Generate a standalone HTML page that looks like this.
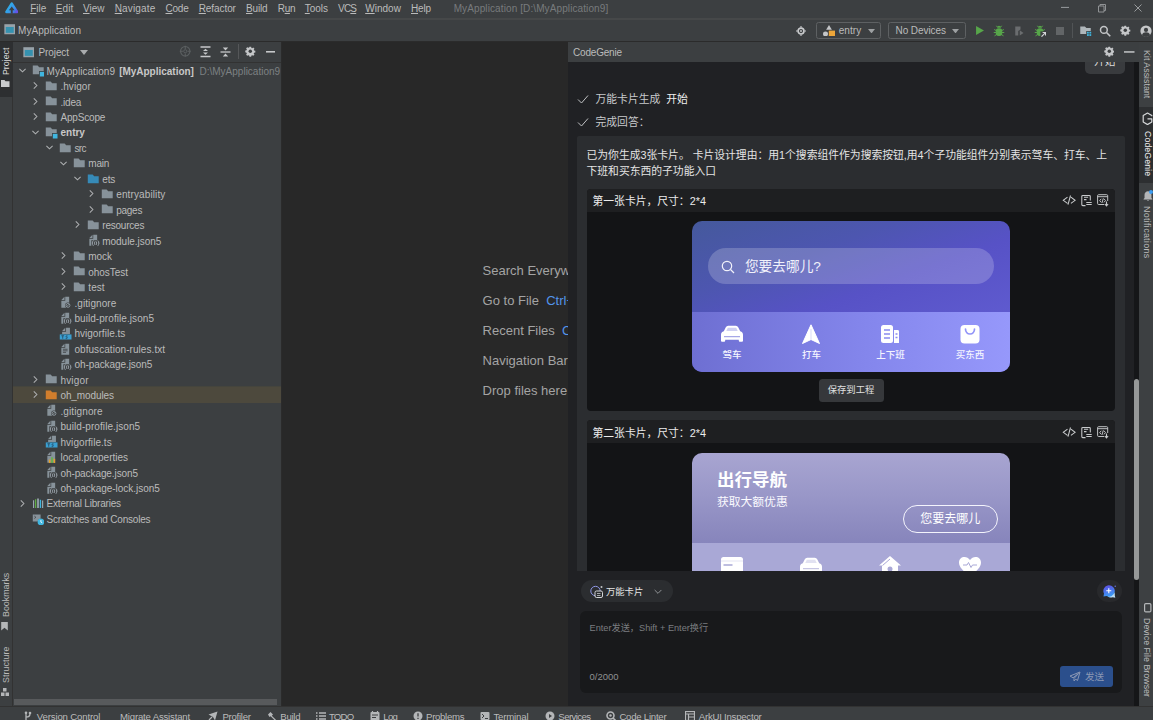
<!DOCTYPE html>
<html lang="zh">
<head>
<meta charset="utf-8">
<title>MyApplication</title>
<style>
*{box-sizing:border-box;margin:0;padding:0}
html,body{width:1153px;height:720px;overflow:hidden;background:#3c3f41}
body{position:relative;font-family:"Liberation Sans","Noto Sans CJK SC",sans-serif;font-size:10px;color:#bbbbbb;line-height:1}
.abs{position:absolute}
.t{position:absolute;white-space:nowrap;line-height:14px;height:14px}
u{text-decoration-thickness:1px;text-underline-offset:1px}
/* top bars */
#menubar{left:0;top:0;width:1153px;height:18px;background:#3c3f41}
#menubar .t{font-size:10px;color:#bbbbbb}
#navbar{left:0;top:17px;width:1153px;height:25px;background:#3c3f41;border-top:1px solid #3c3f41;border-bottom:1px solid #2b2b2b}
#navbar:before{content:"";position:absolute;left:0;top:-.2px;width:100%;height:2.200px;background:#464849}
/* left strip */
#lstrip{left:0;top:42px;width:13px;height:664px;background:#3c3f41;border-right:1px solid #323232}
.vt{position:absolute;white-space:nowrap;font-size:9.2px;line-height:12px;height:12px;transform-origin:0 0}
/* project panel */
#proj{left:13px;top:42px;width:269px;height:664px;background:#3c3f41;border-right:1px solid #2b2b2b;overflow:hidden}
#projhead{left:0;top:0;width:268px;height:21px;border-bottom:1px solid #323232}
.row{position:absolute;left:0;width:268px;height:15.48px}
.row .t{top:2px;line-height:14px;font-size:10px;color:#bbbbbb}
.row svg{position:absolute}
/* editor */
#editor{left:282px;top:42px;width:286px;height:664px;background:#282828;overflow:hidden}
#editor .t{font-size:13px;line-height:16px;height:16px;color:#a4a4a4}
#editor .k{color:#5394ec}
/* codegenie */
#cg{left:568px;top:42px;width:571px;height:664px;background:#202124;overflow:hidden}
#cghead{left:0;top:0;width:571px;height:20px;background:#3c3f41}
/* right strip */
#rstrip{left:1139px;top:42px;width:14px;height:664px;background:#3d4042}
/* status bar */
#status{left:0;top:705.5px;width:1153px;height:14.5px;background:#3c3f41;border-top:1px solid #323232}
#status .t{font-size:9.6px;line-height:12px;height:12px;color:#bbbbbb}
#status svg{position:absolute}
.cj{font-family:"Liberation Sans","Noto Sans CJK SC",sans-serif}
</style>
</head>
<body>
<!-- MENUBAR -->
<div id="menubar" class="abs">
<svg style="left:4.8px;top:2px" class="abs" width="13.5" height="11.5" viewBox="0 0 13.500 11.500" ><defs><linearGradient id="lg" x1="0" y1=".3" x2="1" y2=".9"><stop offset="0" stop-color="#2bb3e6"/><stop offset=".7" stop-color="#3c8fea"/><stop offset="1" stop-color="#5a55e6"/></linearGradient></defs><path d="M6.750 1.600 12 9.900H1.500z" fill="url(#lg)" stroke="url(#lg)" stroke-width="2.600" stroke-linejoin="round"/><path d="M6.750 4.600 9.600 8.300H7.700V11.500H5.800V8.300H3.900z" fill="#3c3f41"/><circle cx="11.900" cy="9.700" r="1.200" fill="#6a52e6"/></svg><span class="t" style="left:30.2px;top:1.5px;letter-spacing:-0.004px;"><u>F</u>ile</span><span class="t" style="left:55.8px;top:1.5px;letter-spacing:0.105px;"><u>E</u>dit</span><span class="t" style="left:83px;top:1.5px;letter-spacing:0.030px;"><u>V</u>iew</span><span class="t" style="left:114.7px;top:1.5px;letter-spacing:0.164px;"><u>N</u>avigate</span><span class="t" style="left:165.5px;top:1.5px;letter-spacing:-0.231px;"><u>C</u>ode</span><span class="t" style="left:198.7px;top:1.5px;letter-spacing:-0.079px;"><u>R</u>efactor</span><span class="t" style="left:246px;top:1.5px;letter-spacing:-0.142px;"><u>B</u>uild</span><span class="t" style="left:277.7px;top:1.5px;letter-spacing:-0.298px;">R<u>u</u>n</span><span class="t" style="left:304.8px;top:1.5px;letter-spacing:-0.032px;"><u>T</u>ools</span><span class="t" style="left:338px;top:1.5px;letter-spacing:-0.785px;">VC<u>S</u></span><span class="t" style="left:365.2px;top:1.5px;letter-spacing:0.024px;"><u>W</u>indow</span><span class="t" style="left:411px;top:1.5px;letter-spacing:-0.162px;"><u>H</u>elp</span><span class="t" style="left:453.7px;top:1.5px;letter-spacing:0.105px;color:#787b7d">MyApplication [D:\MyApplication9]</span><svg style="left:1057px;top:1px" class="abs" width="16" height="12" viewBox="0 0 16 12" ><path d="M4 6.400h8" stroke="#999c9e" stroke-width="1"/></svg><svg style="left:1094px;top:1px" class="abs" width="16" height="14" viewBox="0 0 16 14" ><path d="M4.500 5h5.500v6H4.500zM6 5V3.500h5.500v6H10" fill="none" stroke="#909395" stroke-width="1"/></svg><svg style="left:1130px;top:1px" class="abs" width="16" height="14" viewBox="0 0 16 14" ><path d="M4.500 3.500l7 7M11.500 3.500l-7 7" fill="none" stroke="#999c9e" stroke-width="1"/></svg>
</div>
<!-- NAVBAR -->
<div id="navbar" class="abs">
<svg style="left:3.6px;top:6px" class="abs" width="11" height="11" viewBox="0 0 16 16" ><rect x=".500" y=".300" width="16.200" height="14.600" fill="#98a3aa"/><rect x="2.600" y="4.300" width="11.600" height="8.600" fill="#3592b0"/></svg><span class="t" style="left:18px;top:5.6px;letter-spacing:0.060px;color:#bbbbbb">MyApplication</span><svg style="left:796.3px;top:7.5px" class="abs" width="10" height="10" viewBox="0 0 16 16" ><circle cx="8" cy="8" r="4.700" fill="none" stroke="#c8cacc" stroke-width="2.600"/><circle cx="8" cy="8" r="1.500" fill="#c8cacc"/><path d="M8 0v2.500M8 13.500V16M0 8h2.500M13.500 8H16" stroke="#c8cacc" stroke-width="1.800"/></svg><div class="abs" style="left:816.200px;top:3.9000000000000004px;width:65.300px;height:16.800px;border:1px solid #5e6163;border-radius:2.500px"></div><svg style="left:823.3px;top:6.6px" class="abs" width="12" height="11.4" viewBox="0 0 12 11.400" ><path d="M6 0 8.900 4.700H3.100z" fill="#c4c6c8"/><circle cx="2.500" cy="8.900" r="2.500" fill="#c4c6c8"/><rect x="5.800" y="5.600" width="6.200" height="5.800" fill="#eda63a"/></svg><span class="t" style="left:838.7px;top:5.5px;letter-spacing:0.082px;">entry</span><svg style="left:867.6px;top:10.6px" class="abs" width="7" height="4.4" viewBox="0 0 7 4.400" ><path d="M0 0h7L3.500 4.400z" fill="#9da0a2"/></svg><div class="abs" style="left:888.400px;top:3.9000000000000004px;width:77.800px;height:16.800px;border:1px solid #5e6163;border-radius:2.500px"></div><span class="t" style="left:895.5px;top:5.5px;letter-spacing:-0.066px;">No Devices</span><svg style="left:951.7px;top:10.6px" class="abs" width="7" height="4.4" viewBox="0 0 7 4.400" ><path d="M0 0h7L3.500 4.400z" fill="#9da0a2"/></svg><svg style="left:973.5px;top:7.0px" class="abs" width="11" height="11" viewBox="0 0 16 16" ><path d="M3 1.500 14.500 8 3 14.500z" fill="#57a64a"/></svg><svg style="left:993px;top:6.5px" class="abs" width="12" height="12" viewBox="0 0 16 16" ><rect x="3.700" y="4.300" width="8.600" height="10.200" rx="3.800" fill="#57a64a"/><path d="M5.500 3.500a2.500 2.500 0 0 1 5 0z" fill="#57a64a"/><path d="M1.500 6l3 1.500M14.500 6l-3 1.500M1 10h3.500M15 10h-3.500M2 14.500l3-2M14 14.500l-3-2M4.500 1l1.500 2M11.500 1 10 3" stroke="#57a64a" stroke-width="1.300" fill="none"/></svg><svg style="left:1013px;top:6.5px" class="abs" width="12" height="12" viewBox="0 0 16 16" ><path d="M3 2h7v4l-3 2v6H3z" fill="#6a6d6f"/><path d="M9 7l5 3.500L9 14z" fill="#6a6d6f"/></svg><svg style="left:1034px;top:6.5px" class="abs" width="12" height="12" viewBox="0 0 16 16" ><rect x="3.700" y="4.300" width="8.600" height="10.200" rx="3.800" fill="#57a64a"/><path d="M5.500 3.500a2.500 2.500 0 0 1 5 0z" fill="#57a64a"/><path d="M1.500 6l3 1.500M14.500 6l-3 1.500M1 10h3.500M15 10h-3.500M2 14.500l3-2M4.500 1l1.500 2M11.500 1 10 3" stroke="#57a64a" stroke-width="1.300" fill="none"/><rect x="8.500" y="8.500" width="8" height="8" fill="#3c3f41"/><path d="M10 15.500l5-5M11.500 10H15.500v4" stroke="#d4d6d8" stroke-width="1.600" fill="none"/></svg><svg style="left:1055.5px;top:8.5px" class="abs" width="8" height="8" viewBox="0 0 8 8" ><rect width="8" height="8" fill="#626567"/></svg><div class="abs" style="left:1072px;top:5.0px;width:1px;height:15px;background:#515456"></div><svg style="left:1078.5px;top:6.5px" class="abs" width="13" height="12" viewBox="0 0 16 16" ><path d="M9.200 4 7.200 2H1v10h8V8h6V4z" fill="#afb6ba"/><rect x="10" y="9" width="2.400" height="2.400" fill="#40b6e0"/><rect x="13.200" y="9" width="2.400" height="2.400" fill="#40b6e0"/><rect x="10" y="12.200" width="2.400" height="2.400" fill="#40b6e0"/><rect x="13.200" y="12.200" width="2.400" height="2.400" fill="#40b6e0"/></svg><svg style="left:1098.5px;top:6.5px" class="abs" width="12" height="12" viewBox="0 0 16 16" ><circle cx="6.500" cy="6.500" r="4.500" fill="none" stroke="#c4c6c8" stroke-width="2"/><path d="M10 10l5 5" stroke="#c4c6c8" stroke-width="2.200"/></svg><svg style="left:1120px;top:7.2px" class="abs" width="10.6" height="10.6" viewBox="0 0 16 16" ><path fill="#c4c6c8" d="M6.700 1h2.600l.4 1.900 1.200.5 1.600-1.100 1.800 1.800-1.100 1.600.5 1.200 1.900.4v2.600l-1.900.4-.5 1.200 1.100 1.600-1.800 1.800-1.600-1.100-1.200.5-.4 1.900H6.700l-.4-1.900-1.200-.5-1.600 1.100-1.800-1.800 1.100-1.600-.5-1.200L.4 9.300V6.700l1.900-.4.5-1.200-1.100-1.600 1.800-1.800 1.600 1.100 1.200-.5z"/><circle cx="8" cy="8" r="2.600" fill="#3c3f41"/></svg><svg style="left:1139.5px;top:6.5px" class="abs" width="12" height="12" viewBox="0 0 16 16" ><circle cx="8" cy="8" r="7.500" fill="#c4c6c8"/><circle cx="8" cy="6.500" r="2.800" fill="#3c3f41"/><path d="M2.500 13.500c1-3 3-3.800 5.500-3.800s4.500.8 5.500 3.800a7.500 7.500 0 0 1-11 0z" fill="#3c3f41"/></svg>
</div>
<!-- LEFT STRIP -->
<div id="lstrip" class="abs">
<div class="abs" style="left:0;top:0;width:12.5px;height:54.5px;background:#2d2f31"></div><span class="vt" style="left:-0.3px;top:33.2px;transform:rotate(-90deg);color:#dcdcdc;font-size:8.800px;letter-spacing:0.002px;">Project</span><svg style="left:1px;top:38.3px" class="abs" width="8.5" height="7" viewBox="0 0 8.500 7" ><path d="M0 0h3.500l1 1.300H8.500V7H0z" fill="#c9cbcd"/></svg><span class="vt" style="left:-0.3px;top:575px;transform:rotate(-90deg);color:#bbbbbb;font-size:8.800px;letter-spacing:0.034px;">Bookmarks</span><svg style="left:1.2px;top:580px" class="abs" width="7" height="8.5" viewBox="0 0 7 9" ><path d="M0 0h7v9L3.500 6 0 9z" fill="#b4b6b8"/></svg><span class="vt" style="left:-0.3px;top:641.4px;transform:rotate(-90deg);color:#bbbbbb;font-size:8.800px;letter-spacing:0.082px;">Structure</span><svg style="left:1.1px;top:646px" class="abs" width="8" height="8" viewBox="0 0 8 8" ><rect x="0" y="4.500" width="3.500" height="3.500" fill="#b4b6b8"/><rect x="4.500" y="4.500" width="3.500" height="3.500" fill="#b4b6b8"/><rect x="2" y="0" width="3.500" height="3.500" fill="#b4b6b8"/></svg>
</div>
<!-- PROJECT -->
<div id="proj" class="abs">
<div id="projhead" class="abs"><svg style="left:9.7px;top:4.5px" class="abs" width="11" height="11" viewBox="0 0 16 16" ><rect x=".500" y=".300" width="16.200" height="14.600" fill="#98a3aa"/><rect x="2.600" y="4.300" width="11.600" height="8.600" fill="#3592b0"/></svg><span class="t" style="left:25.5px;top:4.4px;letter-spacing:-0.096px;">Project</span><svg style="left:67px;top:8px" class="abs" width="8" height="5" viewBox="0 0 8 5" ><path d="M0 0h8L4 5z" fill="#a9acae"/></svg><svg style="left:165.5px;top:3.1px" class="abs" width="12.5" height="12.5" viewBox="0 0 16 16" ><circle cx="8" cy="8" r="6" fill="none" stroke="#5c6062" stroke-width="1.400"/><circle cx="8" cy="8" r="2" fill="none" stroke="#5c6062" stroke-width="1.200"/><path d="M8 1v4M8 11v4M1 8h4M11 8h4" stroke="#5c6062" stroke-width="1.300"/></svg><svg style="left:186.5px;top:4px" class="abs" width="11" height="11.5" viewBox="0 0 11 11.500" ><path d="M.500 1h10M.500 10.500h10" stroke="#c6c8ca" stroke-width="1.400"/><path d="M5.500 2.700 8 5H3zM5.500 8.800 8 6.500H3z" fill="#c6c8ca"/></svg><svg style="left:206.5px;top:5px" class="abs" width="11" height="10" viewBox="0 0 11 10" ><path d="M.500 5h10" stroke="#c6c8ca" stroke-width="1.300"/><path d="M5.500 3.600 8.200 .500H2.800zM5.500 6.400 8.200 9.500H2.800z" fill="#c6c8ca"/></svg><div class="abs" style="left:224.500px;top:2px;width:1px;height:15px;background:#555759"></div><svg style="left:232.1px;top:4.3px" class="abs" width="10.6" height="10.6" viewBox="0 0 16 16" ><path fill="#c4c6c8" d="M6.700 1h2.600l.4 1.900 1.200.5 1.600-1.100 1.800 1.800-1.100 1.600.5 1.200 1.900.4v2.600l-1.900.4-.5 1.200 1.100 1.600-1.800 1.800-1.600-1.100-1.200.5-.4 1.900H6.700l-.4-1.900-1.200-.5-1.600 1.100-1.800-1.800 1.100-1.600-.5-1.200L.4 9.300V6.700l1.900-.4.5-1.200-1.100-1.600 1.800-1.800 1.600 1.100 1.200-.5z"/><circle cx="8" cy="8" r="2.600" fill="#3c3f41"/></svg><svg style="left:252.9px;top:9.1px" class="abs" width="9.5" height="1.6" viewBox="0 0 9.500 1.600" ><rect width="9.500" height="1.600" fill="#c6c8ca"/></svg></div>
<div class="row" style="top:20.60px"><svg style="left:3.5px;top:2.2px" class="abs" width="11" height="11" viewBox="0 0 16 16" ><path d="M3.5 5.5 8 10l4.5-4.5" fill="none" stroke="#afb1b3" stroke-width="1.5"/></svg><svg style="left:18.5px;top:1.7px" class="abs" width="12.5" height="12.5" viewBox="0 0 16 16" ><path fill="#9aa7b0" fill-opacity=".8" d="M9.2 4 7.2 2H1v11h8V9h6V4z"/><rect x="10" y="10" width="6" height="6" fill="#40b6e0"/></svg><span class="t" style="left:33.5px"><span style="letter-spacing:0.051px;">MyApplication9</span><span style="letter-spacing:-0.014px;font-weight:bold;color:#c8c8c8;margin-left:4.1px;">[MyApplication]</span><span style="letter-spacing:0.000px;color:#7d8183;margin-left:5.6px;">D:\MyApplication9</span></span></div>
<div class="row" style="top:36.06px"><svg style="left:17.35px;top:2.2px" class="abs" width="11" height="11" viewBox="0 0 16 16" ><path d="M5.5 3.5 10 8l-4.5 4.5" fill="none" stroke="#afb1b3" stroke-width="1.5"/></svg><svg style="left:32.4px;top:1.7px" class="abs" width="12.5" height="12.5" viewBox="0 0 16 16" ><path fill="#9aa7b0" fill-opacity=".8" d="M9.2 4 7.2 2H1v11h14V4z"/></svg><span class="t" style="left:47.45px"><span style="letter-spacing:0.044px;">.hvigor</span></span></div>
<div class="row" style="top:51.52px"><svg style="left:17.35px;top:2.2px" class="abs" width="11" height="11" viewBox="0 0 16 16" ><path d="M5.5 3.5 10 8l-4.5 4.5" fill="none" stroke="#afb1b3" stroke-width="1.5"/></svg><svg style="left:32.4px;top:1.7px" class="abs" width="12.5" height="12.5" viewBox="0 0 16 16" ><path fill="#9aa7b0" fill-opacity=".8" d="M9.2 4 7.2 2H1v11h14V4z"/></svg><span class="t" style="left:47.45px"><span style="letter-spacing:-0.197px;">.idea</span></span></div>
<div class="row" style="top:66.98px"><svg style="left:17.35px;top:2.2px" class="abs" width="11" height="11" viewBox="0 0 16 16" ><path d="M5.5 3.5 10 8l-4.5 4.5" fill="none" stroke="#afb1b3" stroke-width="1.5"/></svg><svg style="left:32.4px;top:1.7px" class="abs" width="12.5" height="12.5" viewBox="0 0 16 16" ><path fill="#9aa7b0" fill-opacity=".8" d="M9.2 4 7.2 2H1v11h14V4z"/></svg><span class="t" style="left:47.45px"><span style="letter-spacing:-0.167px;">AppScope</span></span></div>
<div class="row" style="top:82.44px"><svg style="left:17.35px;top:2.2px" class="abs" width="11" height="11" viewBox="0 0 16 16" ><path d="M3.5 5.5 8 10l4.5-4.5" fill="none" stroke="#afb1b3" stroke-width="1.5"/></svg><svg style="left:32.4px;top:1.7px" class="abs" width="12.5" height="12.5" viewBox="0 0 16 16" ><path fill="#9aa7b0" fill-opacity=".8" d="M9.2 4 7.2 2H1v11h8V9h6V4z"/><rect x="10" y="10" width="6" height="6" fill="#40b6e0"/></svg><span class="t" style="left:47.45px"><span style="letter-spacing:0.010px;font-weight:bold;color:#c8c8c8;">entry</span></span></div>
<div class="row" style="top:97.90px"><svg style="left:31.200000000000003px;top:2.2px" class="abs" width="11" height="11" viewBox="0 0 16 16" ><path d="M3.5 5.5 8 10l4.5-4.5" fill="none" stroke="#afb1b3" stroke-width="1.5"/></svg><svg style="left:46.3px;top:1.7px" class="abs" width="12.5" height="12.5" viewBox="0 0 16 16" ><path fill="#9aa7b0" fill-opacity=".8" d="M9.2 4 7.2 2H1v11h14V4z"/></svg><span class="t" style="left:61.400000000000006px"><span style="letter-spacing:-0.652px;">src</span></span></div>
<div class="row" style="top:113.36px"><svg style="left:45.05px;top:2.2px" class="abs" width="11" height="11" viewBox="0 0 16 16" ><path d="M3.5 5.5 8 10l4.5-4.5" fill="none" stroke="#afb1b3" stroke-width="1.5"/></svg><svg style="left:60.2px;top:1.7px" class="abs" width="12.5" height="12.5" viewBox="0 0 16 16" ><path fill="#9aa7b0" fill-opacity=".8" d="M9.2 4 7.2 2H1v11h14V4z"/></svg><span class="t" style="left:75.35px"><span style="letter-spacing:-0.222px;">main</span></span></div>
<div class="row" style="top:128.82px"><svg style="left:58.900000000000006px;top:2.2px" class="abs" width="11" height="11" viewBox="0 0 16 16" ><path d="M3.5 5.5 8 10l4.5-4.5" fill="none" stroke="#afb1b3" stroke-width="1.5"/></svg><svg style="left:74.1px;top:1.7px" class="abs" width="12.5" height="12.5" viewBox="0 0 16 16" ><path fill="#3592c4" fill-opacity=".9" d="M9.2 4 7.2 2H1v11h14V4z"/></svg><span class="t" style="left:89.3px"><span style="letter-spacing:-0.216px;">ets</span></span></div>
<div class="row" style="top:144.28px"><svg style="left:72.75px;top:2.2px" class="abs" width="11" height="11" viewBox="0 0 16 16" ><path d="M5.5 3.5 10 8l-4.5 4.5" fill="none" stroke="#afb1b3" stroke-width="1.5"/></svg><svg style="left:88.0px;top:1.7px" class="abs" width="12.5" height="12.5" viewBox="0 0 16 16" ><path fill="#9aa7b0" fill-opacity=".8" d="M9.2 4 7.2 2H1v11h14V4z"/></svg><span class="t" style="left:103.25px"><span style="letter-spacing:0.113px;">entryability</span></span></div>
<div class="row" style="top:159.74px"><svg style="left:72.75px;top:2.2px" class="abs" width="11" height="11" viewBox="0 0 16 16" ><path d="M5.5 3.5 10 8l-4.5 4.5" fill="none" stroke="#afb1b3" stroke-width="1.5"/></svg><svg style="left:88.0px;top:1.7px" class="abs" width="12.5" height="12.5" viewBox="0 0 16 16" ><path fill="#9aa7b0" fill-opacity=".8" d="M9.2 4 7.2 2H1v11h14V4z"/></svg><span class="t" style="left:103.25px"><span style="letter-spacing:-0.277px;">pages</span></span></div>
<div class="row" style="top:175.20px"><svg style="left:58.900000000000006px;top:2.2px" class="abs" width="11" height="11" viewBox="0 0 16 16" ><path d="M5.5 3.5 10 8l-4.5 4.5" fill="none" stroke="#afb1b3" stroke-width="1.5"/></svg><svg style="left:74.1px;top:1.7px" class="abs" width="12.5" height="12.5" viewBox="0 0 16 16" ><path fill="#9aa7b0" fill-opacity=".8" d="M9.2 4 7.2 2H1v11h14V4z"/></svg><span class="t" style="left:89.3px"><span style="letter-spacing:-0.224px;">resources</span></span></div>
<div class="row" style="top:190.66px"><svg style="left:74.1px;top:1.7px" class="abs" width="12.5" height="12.5" viewBox="0 0 16 16" ><path fill="#9aa7b0" fill-opacity=".8" d="M7 1 3 5h4z"/><path fill="#9aa7b0" fill-opacity=".8" d="M8 1v5H3v9h2.500V8H13V1z"/><path d="M8.300 8.700c-1.100 0-1.100.8-1.100 1.600s0 1.400-.9 1.400c.9 0 .9.700.9 1.500s0 1.600 1.100 1.600M13.700 8.700c1.100 0 1.100.8 1.100 1.600s0 1.400.9 1.400c-.9 0-.9.700-.9 1.500s0 1.600-1.100 1.600M10.300 9.500c-.8.600-.8 3.800 0 4.500M11.700 9.500c.8.600.8 3.800 0 4.500" fill="none" stroke="#b4bec6" stroke-width="1"/></svg><span class="t" style="left:89.3px"><span style="letter-spacing:-0.042px;">module.json5</span></span></div>
<div class="row" style="top:206.12px"><svg style="left:45.05px;top:2.2px" class="abs" width="11" height="11" viewBox="0 0 16 16" ><path d="M5.5 3.5 10 8l-4.5 4.5" fill="none" stroke="#afb1b3" stroke-width="1.5"/></svg><svg style="left:60.2px;top:1.7px" class="abs" width="12.5" height="12.5" viewBox="0 0 16 16" ><path fill="#9aa7b0" fill-opacity=".8" d="M9.2 4 7.2 2H1v11h14V4z"/></svg><span class="t" style="left:75.35px"><span style="letter-spacing:-0.083px;">mock</span></span></div>
<div class="row" style="top:221.58px"><svg style="left:45.05px;top:2.2px" class="abs" width="11" height="11" viewBox="0 0 16 16" ><path d="M5.5 3.5 10 8l-4.5 4.5" fill="none" stroke="#afb1b3" stroke-width="1.5"/></svg><svg style="left:60.2px;top:1.7px" class="abs" width="12.5" height="12.5" viewBox="0 0 16 16" ><path fill="#9aa7b0" fill-opacity=".8" d="M9.2 4 7.2 2H1v11h14V4z"/></svg><span class="t" style="left:75.35px"><span style="letter-spacing:-0.057px;">ohosTest</span></span></div>
<div class="row" style="top:237.04px"><svg style="left:45.05px;top:2.2px" class="abs" width="11" height="11" viewBox="0 0 16 16" ><path d="M5.5 3.5 10 8l-4.5 4.5" fill="none" stroke="#afb1b3" stroke-width="1.5"/></svg><svg style="left:60.2px;top:1.7px" class="abs" width="12.5" height="12.5" viewBox="0 0 16 16" ><path fill="#9aa7b0" fill-opacity=".8" d="M9.2 4 7.2 2H1v11h14V4z"/></svg><span class="t" style="left:75.35px"><span style="letter-spacing:0.052px;">test</span></span></div>
<div class="row" style="top:252.50px"><svg style="left:46.3px;top:1.7px" class="abs" width="12.5" height="12.5" viewBox="0 0 16 16" ><path fill="#9aa7b0" fill-opacity=".8" d="M7 1 3 5h4z"/><path fill="#9aa7b0" fill-opacity=".8" d="M8 1v5H3v9h10V1z"/><circle cx="11.500" cy="12" r="3.600" fill="#3c3f41"/><circle cx="11.500" cy="12" r="2.500" fill="none" stroke="#9aa7b0" stroke-width="1"/><path d="M9.800 13.700 13.200 10.300" stroke="#9aa7b0" stroke-width="1"/></svg><span class="t" style="left:61.400000000000006px"><span style="letter-spacing:0.091px;">.gitignore</span></span></div>
<div class="row" style="top:267.96px"><svg style="left:46.3px;top:1.7px" class="abs" width="12.5" height="12.5" viewBox="0 0 16 16" ><path fill="#9aa7b0" fill-opacity=".8" d="M7 1 3 5h4z"/><path fill="#9aa7b0" fill-opacity=".8" d="M8 1v5H3v9h2.500V8H13V1z"/><path d="M8.300 8.700c-1.100 0-1.100.8-1.100 1.600s0 1.400-.9 1.400c.9 0 .9.700.9 1.500s0 1.600 1.100 1.600M13.700 8.700c1.100 0 1.100.8 1.100 1.600s0 1.400.9 1.400c-.9 0-.9.700-.9 1.500s0 1.600-1.100 1.600M10.300 9.500c-.8.600-.8 3.800 0 4.500M11.700 9.500c.8.600.8 3.800 0 4.500" fill="none" stroke="#b4bec6" stroke-width="1"/></svg><span class="t" style="left:61.400000000000006px"><span style="letter-spacing:0.066px;">build-profile.json5</span></span></div>
<div class="row" style="top:283.42px"><svg style="left:46.3px;top:1.7px" class="abs" width="12.5" height="12.5" viewBox="0 0 16 16" ><path fill="#9aa7b0" fill-opacity=".8" d="M8 1 4 5h4z"/><path fill="#9aa7b0" fill-opacity=".8" d="M9 1v5H4v3h10V1z"/><rect x="1" y="9.500" width="15" height="6.500" fill="#3a9fd1"/><path d="M3 11.200h3.500M4.750 11.200V15M11 11.500c-1.800-.8-3 .9-1.200 1.500 1.800.7.800 2.300-1.300 1.500" fill="none" stroke="#24445a" stroke-width="1"/></svg><span class="t" style="left:61.400000000000006px"><span style="letter-spacing:0.034px;">hvigorfile.ts</span></span></div>
<div class="row" style="top:298.88px"><svg style="left:46.3px;top:1.7px" class="abs" width="12.5" height="12.5" viewBox="0 0 16 16" ><path fill="#9aa7b0" fill-opacity=".8" d="M7 1 3 5h4z"/><path fill="#9aa7b0" fill-opacity=".8" d="M8 1v5H3v9h10V1z"/><path d="M5 8h6M5 10h6M5 12h4" stroke="#3c3f41" stroke-width="1"/></svg><span class="t" style="left:61.400000000000006px"><span style="letter-spacing:0.059px;">obfuscation-rules.txt</span></span></div>
<div class="row" style="top:314.34px"><svg style="left:46.3px;top:1.7px" class="abs" width="12.5" height="12.5" viewBox="0 0 16 16" ><path fill="#9aa7b0" fill-opacity=".8" d="M7 1 3 5h4z"/><path fill="#9aa7b0" fill-opacity=".8" d="M8 1v5H3v9h2.500V8H13V1z"/><path d="M8.300 8.700c-1.100 0-1.100.8-1.100 1.600s0 1.400-.9 1.400c.9 0 .9.700.9 1.500s0 1.600 1.100 1.600M13.700 8.700c1.100 0 1.100.8 1.100 1.600s0 1.400.9 1.400c-.9 0-.9.700-.9 1.500s0 1.600-1.100 1.600M10.300 9.500c-.8.600-.8 3.800 0 4.500M11.700 9.500c.8.600.8 3.800 0 4.500" fill="none" stroke="#b4bec6" stroke-width="1"/></svg><span class="t" style="left:61.400000000000006px"><span style="letter-spacing:-0.068px;">oh-package.json5</span></span></div>
<div class="row" style="top:329.80px"><svg style="left:17.35px;top:2.2px" class="abs" width="11" height="11" viewBox="0 0 16 16" ><path d="M5.5 3.5 10 8l-4.5 4.5" fill="none" stroke="#afb1b3" stroke-width="1.5"/></svg><svg style="left:32.4px;top:1.7px" class="abs" width="12.5" height="12.5" viewBox="0 0 16 16" ><path fill="#9aa7b0" fill-opacity=".8" d="M9.2 4 7.2 2H1v11h14V4z"/></svg><span class="t" style="left:47.45px"><span style="letter-spacing:0.157px;">hvigor</span></span></div>
<div class="row" style="top:345.26px;background:#4d493d;box-shadow:0 -0.6px 0 #4d493d"><svg style="left:17.35px;top:2.2px" class="abs" width="11" height="11" viewBox="0 0 16 16" ><path d="M5.5 3.5 10 8l-4.5 4.5" fill="none" stroke="#afb1b3" stroke-width="1.5"/></svg><svg style="left:32.4px;top:1.7px" class="abs" width="12.5" height="12.5" viewBox="0 0 16 16" ><path fill="#d9822b" fill-opacity=".95" d="M9.2 4 7.2 2H1v11h14V4z"/></svg><span class="t" style="left:47.45px"><span style="letter-spacing:-0.104px;">oh_modules</span></span></div>
<div class="row" style="top:360.72px"><svg style="left:32.4px;top:1.7px" class="abs" width="12.5" height="12.5" viewBox="0 0 16 16" ><path fill="#9aa7b0" fill-opacity=".8" d="M7 1 3 5h4z"/><path fill="#9aa7b0" fill-opacity=".8" d="M8 1v5H3v9h10V1z"/><circle cx="11.500" cy="12" r="3.600" fill="#3c3f41"/><circle cx="11.500" cy="12" r="2.500" fill="none" stroke="#9aa7b0" stroke-width="1"/><path d="M9.800 13.700 13.200 10.300" stroke="#9aa7b0" stroke-width="1"/></svg><span class="t" style="left:47.45px"><span style="letter-spacing:0.112px;">.gitignore</span></span></div>
<div class="row" style="top:376.18px"><svg style="left:32.4px;top:1.7px" class="abs" width="12.5" height="12.5" viewBox="0 0 16 16" ><path fill="#9aa7b0" fill-opacity=".8" d="M7 1 3 5h4z"/><path fill="#9aa7b0" fill-opacity=".8" d="M8 1v5H3v9h2.500V8H13V1z"/><path d="M8.300 8.700c-1.100 0-1.100.8-1.100 1.600s0 1.400-.9 1.400c.9 0 .9.700.9 1.500s0 1.600 1.100 1.600M13.700 8.700c1.100 0 1.100.8 1.100 1.600s0 1.400.9 1.400c-.9 0-.9.700-.9 1.500s0 1.600-1.100 1.600M10.300 9.500c-.8.600-.8 3.800 0 4.500M11.700 9.500c.8.600.8 3.800 0 4.500" fill="none" stroke="#b4bec6" stroke-width="1"/></svg><span class="t" style="left:47.45px"><span style="letter-spacing:0.071px;">build-profile.json5</span></span></div>
<div class="row" style="top:391.64px"><svg style="left:32.4px;top:1.7px" class="abs" width="12.5" height="12.5" viewBox="0 0 16 16" ><path fill="#9aa7b0" fill-opacity=".8" d="M8 1 4 5h4z"/><path fill="#9aa7b0" fill-opacity=".8" d="M9 1v5H4v3h10V1z"/><rect x="1" y="9.500" width="15" height="6.500" fill="#3a9fd1"/><path d="M3 11.200h3.500M4.750 11.200V15M11 11.500c-1.800-.8-3 .9-1.200 1.500 1.800.7.800 2.300-1.300 1.500" fill="none" stroke="#24445a" stroke-width="1"/></svg><span class="t" style="left:47.45px"><span style="letter-spacing:0.058px;">hvigorfile.ts</span></span></div>
<div class="row" style="top:407.10px"><svg style="left:32.4px;top:1.7px" class="abs" width="12.5" height="12.5" viewBox="0 0 16 16" ><path fill="#9aa7b0" fill-opacity=".8" d="M7 1 3 5h4z"/><path fill="#9aa7b0" fill-opacity=".8" d="M8 1v5H3v9h10V1z"/><rect x="5" y="11" width="2" height="5" fill="#e5a028"/><rect x="8" y="8" width="2" height="8" fill="#62b543"/><rect x="11" y="10" width="2" height="6" fill="#e5a028"/></svg><span class="t" style="left:47.45px"><span style="letter-spacing:-0.020px;">local.properties</span></span></div>
<div class="row" style="top:422.56px"><svg style="left:32.4px;top:1.7px" class="abs" width="12.5" height="12.5" viewBox="0 0 16 16" ><path fill="#9aa7b0" fill-opacity=".8" d="M7 1 3 5h4z"/><path fill="#9aa7b0" fill-opacity=".8" d="M8 1v5H3v9h2.500V8H13V1z"/><path d="M8.300 8.700c-1.100 0-1.100.8-1.100 1.600s0 1.400-.9 1.400c.9 0 .9.700.9 1.500s0 1.600 1.100 1.600M13.700 8.700c1.100 0 1.100.8 1.100 1.600s0 1.400.9 1.400c-.9 0-.9.700-.9 1.500s0 1.600-1.100 1.600M10.300 9.500c-.8.600-.8 3.800 0 4.500M11.700 9.500c.8.600.8 3.800 0 4.500" fill="none" stroke="#b4bec6" stroke-width="1"/></svg><span class="t" style="left:47.45px"><span style="letter-spacing:-0.087px;">oh-package.json5</span></span></div>
<div class="row" style="top:438.02px"><svg style="left:32.4px;top:1.7px" class="abs" width="12.5" height="12.5" viewBox="0 0 16 16" ><path fill="#9aa7b0" fill-opacity=".8" d="M7 1 3 5h4z"/><path fill="#9aa7b0" fill-opacity=".8" d="M8 1v5H3v9h2.500V8H13V1z"/><path d="M8.300 8.700c-1.100 0-1.100.8-1.100 1.600s0 1.400-.9 1.400c.9 0 .9.700.9 1.500s0 1.600 1.100 1.600M13.700 8.700c1.100 0 1.100.8 1.100 1.600s0 1.400.9 1.400c-.9 0-.9.700-.9 1.500s0 1.600-1.100 1.600M10.300 9.500c-.8.600-.8 3.800 0 4.500M11.700 9.500c.8.600.8 3.800 0 4.500" fill="none" stroke="#b4bec6" stroke-width="1"/></svg><span class="t" style="left:47.45px"><span style="letter-spacing:-0.037px;">oh-package-lock.json5</span></span></div>
<div class="row" style="top:453.48px"><svg style="left:3.5px;top:2.2px" class="abs" width="11" height="11" viewBox="0 0 16 16" ><path d="M5.5 3.5 10 8l-4.5 4.5" fill="none" stroke="#afb1b3" stroke-width="1.5"/></svg><svg style="left:18.5px;top:1.7px" class="abs" width="12.5" height="12.5" viewBox="0 0 16 16" ><path d="M2 4v10M13.600 4.500v9.500" stroke="#9aa7b0" stroke-width="1.500"/><path d="M7.700 2v12" stroke="#9aa7b0" stroke-width="2.200"/><path d="M4.700 3v11" stroke="#62b543" stroke-width="1.500"/><path d="M10.800 3.500v10.500" stroke="#40b6e0" stroke-width="1.700"/></svg><span class="t" style="left:33.5px"><span style="letter-spacing:-0.189px;">External Libraries</span></span></div>
<div class="row" style="top:468.94px"><svg style="left:18.5px;top:1.7px" class="abs" width="12.5" height="12.5" viewBox="0 0 16 16" ><path d="M1 2h10v5a5 5 0 0 0-4 4H1z" fill="#9aa7b0" fill-opacity=".8"/><path d="M3 4l2 1.500L3 7" stroke="#3c3f41" fill="none" stroke-width="1"/><circle cx="11.400" cy="11.400" r="4.300" fill="#40b6e0"/><path d="M11.400 9v2.600l1.700 1" stroke="#fff" stroke-width="1.100" fill="none"/></svg><span class="t" style="left:33.5px"><span style="letter-spacing:-0.209px;">Scratches and Consoles</span></span></div>
<div class="abs" style="left:.5px;top:656.700px;width:263.600px;height:6.500px;background:#585a5c"></div>
</div>
<!-- EDITOR -->
<div id="editor" class="abs">
<span class="t" style="left:200.6px;top:220.5px;">Search Everywhere <span class="k">Double Shift</span></span><span class="t" style="left:200.6px;top:250.5px;">Go to File&nbsp; <span class="k">Ctrl+Shift+N</span></span><span class="t" style="left:200.6px;top:280.5px;">Recent Files&nbsp; <span class="k">Ctrl+E</span></span><span class="t" style="left:200.6px;top:310.5px;">Navigation Bar&nbsp; <span class="k">Alt+Home</span></span><span class="t" style="left:200.6px;top:341px;">Drop files here to open them</span>
</div>
<!-- CODEGENIE -->
<div id="cg" class="abs">
<div class="abs" style="left:516.5px;top:13.0px;width:40.5px;height:18.7px;background:#393b3e;border-radius:5px"><span class="t" style="left:9.500px;top:-1px;color:#dcdcdc;font-size:10.800px">开始</span></div><svg style="left:9.200000000000045px;top:52px" class="abs" width="12" height="10.5" viewBox="0 0 12 10.500" ><path d="M1 5.500 4.500 9 11 1.500" fill="none" stroke="#c0c2c4" stroke-width="1"/></svg><span class="t" style="left:27.5px;top:49.5px;color:#c8cacc;font-size:10.800px">万能卡片生成&nbsp; <span style="color:#f0f0f0">开始</span></span><svg style="left:9.200000000000045px;top:75px" class="abs" width="12" height="10.5" viewBox="0 0 12 10.500" ><path d="M1 5.500 4.500 9 11 1.500" fill="none" stroke="#c0c2c4" stroke-width="1"/></svg><span class="t" style="left:27.5px;top:72.5px;color:#c8cacc;font-size:10.800px">完成回答：</span><div class="abs" style="left:9.0px;top:94.0px;width:548.0px;height:460.0px;background:#2b2d30;border-radius:2px"></div><span class="t" style="left:18.5px;top:105px;color:#e4e4e4;font-size:10.800px;line-height:16px;height:16px">已为你生成3张卡片。 卡片设计理由：用1个搜索组件作为搜索按钮,用4个子功能组件分别表示驾车、打车、上</span><span class="t" style="left:18.5px;top:121px;color:#e4e4e4;font-size:10.800px;line-height:16px;height:16px">下班和买东西的子功能入口</span><div class="abs" style="left:19.0px;top:147.0px;width:528.3px;height:222.0px;background:#131416;border-radius:4px"></div><div class="abs" style="left:19.0px;top:147.0px;width:528.3px;height:23.0px;background:#1e1f21;border-radius:4px 4px 0 0"></div><span class="t" style="left:24.5px;top:151px;color:#ececec;font-size:10.800px;line-height:16px;height:16px">第一张卡片，尺寸：2*4</span><svg class="abs" style="left:494px;top:152px" width="48" height="14" viewBox="0 0 48 14"><path d="M5.500 3.200 1.300 6.300l4.200 3.100M8.900 3.200l4.200 3.100-4.200 3.100M8.500 1.500 6 10.700" fill="none" stroke="#c8cacc" stroke-width="1.050"/><path d="M28.300 6.500V2.400a1 1 0 0 0-1-1h-6.500a1 1 0 0 0-1 1v8.200a1 1 0 0 0 1 1h2.700M22 3.300h4.200M22 5.600h2.500M24.300 8.400h5.400M24.300 10.500h5.400" fill="none" stroke="#c8cacc" stroke-width="1.050"/><path d="M45.700 7V1.700a1 1 0 0 0-1-1h-8.100a1 1 0 0 0-1 1v7.800a1 1 0 0 0 1 1h5.600M35.600 2.700h10.100M39.200 4.800l-1.500 1.800 1.500 1.800M42 4.800l1.500 1.800-1.500 1.800M41.300 4.300l-1.300 4.600" fill="none" stroke="#c8cacc" stroke-width=".95"/><path d="M44.500 7.500v4M42.900 10l1.600 1.800 1.600-1.800" fill="none" stroke="#c8cacc" stroke-width="1.100"/></svg><div class="abs" style="left:124.39999999999998px;top:179px;width:317.2px;height:150.7px;border-radius:10px;overflow:hidden;background:linear-gradient(160deg,#45599c 0%,#4d56b0 28%,#5752c6 50%,#6561d6 100%)"><div class="abs" style="left:0;top:90.500px;width:100%;height:60.19999999999999px;background:linear-gradient(90deg,#6e6fd2 0%,#8486ec 55%,#9698fb 100%)"></div><div class="abs" style="left:15.600px;top:27.300px;width:286px;height:36px;border-radius:18px;background:rgba(255,255,255,.2)"></div><svg class="abs" style="left:29px;top:38.500px" width="14" height="14" viewBox="0 0 14 14"><circle cx="6" cy="6" r="4.700" fill="none" stroke="#f0f0fa" stroke-width="1.200"/><path d="M9.500 9.500 13 13" stroke="#f0f0fa" stroke-width="1.200"/></svg><span class="t" style="left:52.500px;top:35.5px;font-size:13.700px;line-height:20px;height:20px;color:#f2f2fb">您要去哪儿?</span><svg class="abs" style="left:28.6px;top:102.500px" width="22" height="20" viewBox="0 0 22 20"><path d="M4.800 3.300Q5.500 1.800 7.200 1.800H14.800Q16.500 1.800 17.200 3.300L19.200 7.300C21 7.800 22 8.800 22 10.800V16.800Q22 17.800 21 17.800H18.800Q17.800 17.800 17.800 16.800V15.800H4.200V16.800Q4.200 17.800 3.200 17.800H1Q0 17.800 0 16.800V10.800C0 8.800 1 7.800 2.800 7.300Z" fill="#fff"/><path d="M6.800 3.800H15.200L16.700 7H5.300z" fill="#7577da" fill-opacity=".35"/><path d="M3 12.700H19" stroke="#7577da" stroke-width="1" stroke-opacity=".8"/></svg><span class="t" style="left:14.6px;top:127.500px;width:50px;text-align:center;font-size:9.500px;font-weight:500;line-height:12px;height:12px;color:#f4f4ff">驾车</span><svg class="abs" style="left:108.1px;top:102.500px" width="22" height="20" viewBox="0 0 22 20"><path d="M11 .800 19.500 19.500 11 15.500 2.500 19.500z" fill="#fff" stroke="#fff" stroke-width="1" stroke-linejoin="round"/><path d="M11 5v10.500" stroke="#8285e6" stroke-width=".6" stroke-opacity=".5"/></svg><span class="t" style="left:94.1px;top:127.500px;width:50px;text-align:center;font-size:9.500px;font-weight:500;line-height:12px;height:12px;color:#f4f4ff">打车</span><svg class="abs" style="left:187.1px;top:102.500px" width="22" height="20" viewBox="0 0 22 20"><rect x="2" y="1" width="12" height="18" rx="2.500" fill="#fff"/><path d="M15 6h3.500c1 0 1.500.6 1.500 1.500V19H15z" fill="#fff"/><path d="M5 6h6M5 10h6M5 14h6M16.500 10h2M16.500 13.500h2" stroke="#8a8cf0" stroke-width="1.600"/></svg><span class="t" style="left:173.1px;top:127.500px;width:50px;text-align:center;font-size:9.500px;font-weight:500;line-height:12px;height:12px;color:#f4f4ff">上下班</span><svg class="abs" style="left:266.6px;top:102.500px" width="22" height="20" viewBox="0 0 22 20"><rect x="1.500" y="1" width="19" height="18.500" rx="4" fill="#fff"/><path d="M6.500 5c0 3 2 5 4.500 5s4.500-2 4.500-5" fill="none" stroke="#9395f8" stroke-width="1.700" stroke-linecap="round"/></svg><span class="t" style="left:252.6px;top:127.500px;width:50px;text-align:center;font-size:9.500px;font-weight:500;line-height:12px;height:12px;color:#f4f4ff">买东西</span></div><div class="abs" style="left:250.5px;top:337.0px;width:65.0px;height:22.8px;background:#36383b;border-radius:3.500px;text-align:center;font-size:9.300px;line-height:23.500px;color:#e0e0e0">保存到工程</div><div class="abs" style="left:19.0px;top:378.2px;width:528.3px;height:200.0px;background:#131416;border-radius:4px"></div><div class="abs" style="left:19.0px;top:378.2px;width:528.3px;height:23.3px;background:#1e1f21;border-radius:4px 4px 0 0"></div><span class="t" style="left:24.5px;top:382.5px;color:#ececec;font-size:10.800px;line-height:16px;height:16px">第二张卡片，尺寸：2*4</span><svg class="abs" style="left:494px;top:383.5px" width="48" height="14" viewBox="0 0 48 14"><path d="M5.500 3.200 1.300 6.300l4.200 3.100M8.900 3.200l4.200 3.100-4.200 3.100M8.500 1.500 6 10.700" fill="none" stroke="#c8cacc" stroke-width="1.050"/><path d="M28.300 6.500V2.400a1 1 0 0 0-1-1h-6.500a1 1 0 0 0-1 1v8.200a1 1 0 0 0 1 1h2.700M22 3.300h4.200M22 5.600h2.500M24.300 8.400h5.400M24.300 10.500h5.400" fill="none" stroke="#c8cacc" stroke-width="1.050"/><path d="M45.700 7V1.700a1 1 0 0 0-1-1h-8.100a1 1 0 0 0-1 1v7.800a1 1 0 0 0 1 1h5.600M35.600 2.700h10.100M39.200 4.800l-1.500 1.800 1.500 1.800M42 4.800l1.500 1.800-1.500 1.800M41.300 4.300l-1.300 4.600" fill="none" stroke="#c8cacc" stroke-width=".95"/><path d="M44.500 7.500v4M42.900 10l1.600 1.800 1.600-1.800" fill="none" stroke="#c8cacc" stroke-width="1.100"/></svg><div class="abs" style="left:124.39999999999998px;top:410.6px;width:317.2px;height:150.7px;border-radius:10px;overflow:hidden;background:linear-gradient(180deg,#a8a5d1 0px,#9997c8 42px,#8987bd 84px,#8785bc 91px)"><div class="abs" style="left:0;top:90.500px;width:100%;height:60.19999999999999px;background:#a9a8d6"></div><span class="t" style="left:24.500px;top:15px;font-size:17.500px;font-weight:bold;line-height:24px;height:24px;color:#fff">出行导航</span><span class="t" style="left:24.500px;top:42.500px;font-size:11.800px;line-height:15px;height:15px;color:#fbfbff">获取大额优惠</span><div class="abs" style="left:210.400px;top:52.600px;width:95.200px;height:27.800px;border:1px solid #f4f4fc;border-radius:14px"></div><span class="t" style="left:210.400px;top:58.500px;width:95.200px;text-align:center;font-size:12px;line-height:16px;height:16px;color:#fff">您要去哪儿</span><svg class="abs" style="left:28.6px;top:103px" width="22" height="20" viewBox="0 0 22 20"><rect x="0" y="1" width="22" height="17" rx="2.500" fill="#fff"/><path d="M2.500 9h9" stroke="#a9a8d6" stroke-width="1.400"/><path d="M0 5h22" stroke="#a9a8d6" stroke-width=".5" stroke-opacity=".6"/></svg><svg class="abs" style="left:108.1px;top:103px" width="22" height="20" viewBox="0 0 22 20"><path d="M4.800 3.300Q5.500 1.800 7.200 1.800H14.800Q16.500 1.800 17.200 3.300L19.200 7.300C21 7.800 22 8.800 22 10.800V16.800Q22 17.800 21 17.800H18.800Q17.800 17.800 17.800 16.800V15.800H4.200V16.800Q4.200 17.800 3.200 17.800H1Q0 17.800 0 16.800V10.800C0 8.800 1 7.800 2.800 7.300Z" fill="#fff"/><path d="M6.800 3.800H15.200L16.700 7H5.300z" fill="#a9a8d6" fill-opacity=".35"/><path d="M3 12.700H19" stroke="#a9a8d6" stroke-width="1" stroke-opacity=".8"/></svg><svg class="abs" style="left:187.1px;top:103px" width="22" height="20" viewBox="0 0 22 20"><path d="M11 0 22 9.500h-3V20H3V9.500H0z" fill="#fff"/><path d="M11 3 3.500 9.500" stroke="#a9a8d6" stroke-width="1"/><circle cx="11" cy="13" r="2.500" fill="#a9a8d6"/></svg><svg class="abs" style="left:266.6px;top:103px" width="22" height="20" viewBox="0 0 22 20"><path d="M11 20C4 15 0 11 0 6.500 0 3 2.500 1 5.500 1c2.200 0 4 1.200 5.500 3 1.500-1.800 3.300-3 5.500-3C19.500 1 22 3 22 6.500 22 11 18 15 11 20z" fill="#fff"/><path d="M4 9h4l1.500-2.500 2.500 5L13.500 9H18" fill="none" stroke="#a9a8d6" stroke-width="1"/></svg></div><div class="abs" style="left:566.0px;top:20.0px;width:5.0px;height:644.0px;background:#151618"></div><div class="abs" style="left:566.0px;top:337.4px;width:5.0px;height:200.8px;background:#969898;border-radius:2.500px"></div><div class="abs" style="left:0.0px;top:529.0px;width:566.0px;height:135.0px;background:#202124"></div><div class="abs" style="left:12.6px;top:538.0px;width:92.0px;height:21.7px;background:#2b2d30;border-radius:11px"></div><svg style="left:22px;top:543px" class="abs" width="13" height="13" viewBox="0 0 13 13" ><circle cx="5.500" cy="6" r="4.700" fill="none" stroke="#8f97e6" stroke-width="1"/><rect x="5" y="6" width="7.500" height="6.500" rx="1.500" fill="#2b2d30" stroke="#d4d6d8" stroke-width="1"/><path d="M7 8.500h3.500M7 10.500h3.500" stroke="#c4c6c8" stroke-width=".8"/><circle cx="11.500" cy="2" r="1" fill="#c4c6c8"/></svg><span class="t" style="left:38px;top:542.5px;color:#e6e6e6;font-size:9.300px;line-height:15px;height:15px">万能卡片</span><svg style="left:85.5px;top:546.5px" class="abs" width="8" height="5.5" viewBox="0 0 9 6" ><path d="M.700 1 4.500 4.800 8.300 1" fill="none" stroke="#9da0a2" stroke-width="1"/></svg><div class="abs" style="left:529.0px;top:537.8px;width:24.5px;height:22.5px;background:#28292c;border-radius:11.500px"></div><svg style="left:533.5px;top:541.5px" class="abs" width="15" height="15" viewBox="0 0 15 15" ><defs><linearGradient id="nc" x1=".3" y1="0" x2=".6" y2="1"><stop offset="0" stop-color="#5d4fe2"/><stop offset="1" stop-color="#3a9ff5"/></linearGradient></defs><path d="M9.500 6.500c2 .3 3.800 2.300 3.300 5l.5 2.300-2.500-.600c-1.800.800-3.800.400-4.800-.700" fill="#b9daf2"/><path d="M1.500 12.500 2 9.500A5.700 5.700 0 1 1 4.500 12z" fill="url(#nc)"/><path d="M6.800 4.300v5M4.300 6.800h5" stroke="#fff" stroke-width="1.100"/><circle cx="13.200" cy="2.300" r=".7" fill="#6f7cf0"/></svg><div class="abs" style="left:12.0px;top:569.0px;width:541.7px;height:81.8px;background:#18191b;border-radius:6px"></div><span class="t" style="left:21.5px;top:579px;color:#7b7d80;font-size:9.200px;line-height:14px;height:14px">Enter发送，Shift + Enter换行</span><span class="t" style="left:21.5px;top:628px;color:#8e9092;font-size:9.500px;line-height:14px;height:14px">0/2000</span><div class="abs" style="left:492.0px;top:623.5px;width:52.5px;height:21.1px;background:#2b4f8c;border-radius:3px"></div><svg style="left:501px;top:628.5px" class="abs" width="12" height="11" viewBox="0 0 12 11" ><path d="M11 1 1 5l3 1.800L9.500 2.500 5 7.500v2.500l1.800-1.800L8.500 9.500z" fill="none" stroke="#8a97b4" stroke-width="1" stroke-linejoin="round"/></svg><span class="t" style="left:517px;top:626.5px;color:#8a97b4;font-size:9.500px;line-height:15px;height:15px">发送</span>
<div id="cghead" class="abs"><span class="t" style="left:5px;top:4.2px;letter-spacing:-0.187px;color:#bbbbbb">CodeGenie</span><svg style="left:535.6000000000001px;top:4.4px" class="abs" width="10.6" height="10.6" viewBox="0 0 16 16" ><path fill="#c4c6c8" d="M6.700 1h2.600l.4 1.900 1.200.5 1.600-1.100 1.800 1.800-1.100 1.600.5 1.200 1.900.4v2.600l-1.900.4-.5 1.200 1.100 1.600-1.800 1.800-1.600-1.100-1.200.5-.4 1.900H6.700l-.4-1.900-1.200-.5-1.600 1.100-1.800-1.800 1.100-1.600-.5-1.200L.4 9.300V6.700l1.900-.4.5-1.200-1.100-1.600 1.800-1.800 1.600 1.100 1.200-.5z"/><circle cx="8" cy="8" r="2.600" fill="#3c3f41"/></svg><svg style="left:555.7px;top:8.9px" class="abs" width="11" height="2" viewBox="0 0 11 2" ><rect width="10.500" height="1.500" y=".2" fill="#c4c6c8"/></svg></div>
</div>
<!-- RIGHT STRIP -->
<div id="rstrip" class="abs">
<div class="abs" style="left:0;top:64.700px;width:14px;height:76px;background:#2d2f31"></div><span class="vt" style="left:14.300px;top:8px;transform:rotate(90deg);color:#bbbbbb;font-size:8.800px;letter-spacing:0.029px;">Kit Assistant</span><svg style="left:3px;top:69.7px" class="abs" width="11" height="13.6" viewBox="0 0 11 13.600" ><path d="M9.800 4.200V3.600L5.500 1 1.200 3.600v6.400L5.500 12.600l4.300-2.600V6.800H5.500" fill="none" stroke="#d6d8da" stroke-width="1.200" stroke-linejoin="round"/></svg><span class="vt" style="left:14.300px;top:88.5px;transform:rotate(90deg);color:#f0f0f0;font-size:8.800px;letter-spacing:0.068px;left:15px;">CodeGenie</span><svg style="left:4px;top:148px" class="abs" width="10" height="11.5" viewBox="0 0 10 11.500" ><path d="M5 1.500c-2 0-3.200 1.500-3.200 3.500v2.800L.800 9.300h8.400L8.200 7.800V5C8.200 3 7 1.500 5 1.500zM4 10.500h2" fill="#b4b6b8" stroke="#b4b6b8" stroke-width=".5"/><circle cx="8" cy="2" r="2" fill="#3d9df2"/></svg><span class="vt" style="left:14.300px;top:164px;transform:rotate(90deg);color:#bbbbbb;font-size:8.800px;letter-spacing:0.349px;">Notifications</span><svg style="left:5px;top:561px" class="abs" width="7.5" height="9.5" viewBox="0 0 7.500 9.500" ><rect x=".600" y=".600" width="6.300" height="8.300" rx="1.200" fill="none" stroke="#b4b6b8" stroke-width="1.200"/></svg><span class="vt" style="left:14.300px;top:576px;transform:rotate(90deg);color:#bbbbbb;font-size:8.800px;letter-spacing:0.041px;">Device File Browser</span>
</div>
<!-- STATUS -->
<div id="status" class="abs">
<svg style="left:23px;top:4.2px" class="abs" width="10" height="10" viewBox="0 0 10 10" ><path d="M3 1v8M3 6c3 0 4-1 4-3.500" stroke="#b4b6b8" stroke-width="1.300" fill="none"/><circle cx="3" cy="1.800" r="1.300" fill="#b4b6b8"/><circle cx="7" cy="2" r="1.300" fill="#b4b6b8"/></svg><span class="t" style="left:36.8px;top:4.2px;letter-spacing:-0.147px;">Version Control</span><span class="t" style="left:120px;top:4.2px;letter-spacing:-0.182px;">Migrate Assistant</span><svg style="left:208px;top:4.2px" class="abs" width="10" height="10" viewBox="0 0 10 10" ><path d="M.500 3.500 9.500.500 7 9.500 5 6z" fill="#b4b6b8"/><path d="M1 9l3-3" stroke="#b4b6b8" stroke-width="1.200"/></svg><span class="t" style="left:222.4px;top:4.2px;letter-spacing:-0.268px;">Profiler</span><svg style="left:267px;top:4.2px" class="abs" width="10" height="10" viewBox="0 0 10 10" ><path d="M1 3.500 3.500 1l2.500 2.500L4.800 4.700 9.500 9.400 8.400 10 3.600 5.300 2.500 6z" fill="#b4b6b8"/></svg><span class="t" style="left:280.3px;top:4.2px;letter-spacing:-0.277px;">Build</span><svg style="left:316px;top:4.2px" class="abs" width="10" height="10" viewBox="0 0 10 10" ><path d="M0 2h1.500M3 2h7M0 5h1.500M3 5h7M0 8h1.500M3 8h7" stroke="#b4b6b8" stroke-width="1.500"/></svg><span class="t" style="left:328.9px;top:4.2px;letter-spacing:-0.731px;">TODO</span><svg style="left:370px;top:4.2px" class="abs" width="10" height="10" viewBox="0 0 10 10" ><rect x=".500" y="1" width="9" height="8.500" rx="1" fill="#b4b6b8"/><path d="M2 4h6M2 6.500h4" stroke="#3c3f41" stroke-width="1"/><path d="M2.500 0v2M7.500 0v2" stroke="#b4b6b8" stroke-width="1.200"/></svg><span class="t" style="left:383.3px;top:4.2px;letter-spacing:-0.727px;">Log</span><svg style="left:413px;top:4.2px" class="abs" width="10" height="10" viewBox="0 0 10 10" ><circle cx="5" cy="5" r="4.500" fill="#b4b6b8"/><path d="M5 2.200v3.300M5 6.800v1.200" stroke="#3c3f41" stroke-width="1.300"/></svg><span class="t" style="left:426.1px;top:4.2px;letter-spacing:-0.313px;">Problems</span><svg style="left:480px;top:4.2px" class="abs" width="10" height="10" viewBox="0 0 10 10" ><rect x=".500" y="1" width="9" height="8" rx="1" fill="#b4b6b8"/><path d="M2 3l2 2-2 2M5 7.500h3" stroke="#3c3f41" stroke-width="1" fill="none"/></svg><span class="t" style="left:493.4px;top:4.2px;letter-spacing:-0.157px;">Terminal</span><svg style="left:545px;top:4.2px" class="abs" width="10" height="10" viewBox="0 0 10 10" ><circle cx="5" cy="5" r="4.500" fill="#b4b6b8"/><path d="M4 3 7 5 4 7z" fill="#3c3f41"/></svg><span class="t" style="left:558.3px;top:4.2px;letter-spacing:-0.562px;">Services</span><svg style="left:606px;top:4.2px" class="abs" width="10" height="10" viewBox="0 0 10 10" ><circle cx="4.500" cy="4.500" r="3.500" fill="none" stroke="#b4b6b8" stroke-width="1.600"/><path d="M7 7l2.500 2.500" stroke="#b4b6b8" stroke-width="1.600"/><circle cx="4.500" cy="4.500" r="1.200" fill="#b4b6b8"/></svg><span class="t" style="left:619.4px;top:4.2px;letter-spacing:-0.232px;">Code Linter</span><svg style="left:685px;top:4.2px" class="abs" width="10" height="10" viewBox="0 0 10 10" ><rect x=".500" y=".500" width="9" height="9" fill="none" stroke="#b4b6b8" stroke-width="1.200"/><path d="M.500 3h9M3.500 3v6.500M3.500 6h6" stroke="#b4b6b8" stroke-width="1.200"/></svg><span class="t" style="left:698.8px;top:4.2px;letter-spacing:-0.231px;">ArkUI Inspector</span>
</div>
</body>
</html>
